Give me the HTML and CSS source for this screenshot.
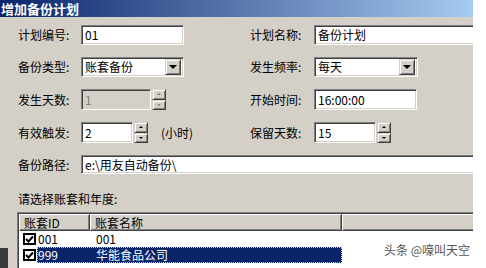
FILE: index.html
```html
<!DOCTYPE html>
<html lang="zh-CN">
<head>
<meta charset="utf-8">
<title>增加备份计划</title>
<link rel="stylesheet" href="styles.css">
</head>
<body>
<div class="dialog">
  <div class="titlebar">增加备份计划</div>
  <div class="form">
    <span class="label">计划编号:</span>
    <div class="cell"><div class="field w103">01</div></div>
    <span class="label">计划名称:</span>
    <div class="cell"><div class="field wide">备份计划</div></div>

    <span class="label">备份类型:</span>
    <div class="cell"><div class="field combo w103"><span class="val">账套备份</span><span class="dropbtn"><i class="tri-down"></i></span></div></div>
    <span class="label">发生频率:</span>
    <div class="cell"><div class="field combo w104"><span class="val">每天</span><span class="dropbtn"><i class="tri-down"></i></span></div></div>

    <span class="label">发生天数:</span>
    <div class="cell">
      <div class="field disabled w70">1</div>
      <div class="spin dis"><span class="sbtn"><i class="tu"></i></span><span class="sbtn"><i class="td"></i></span></div>
    </div>
    <span class="label">开始时间:</span>
    <div class="cell"><div class="field w103">16:00:00</div></div>

    <span class="label">有效触发:</span>
    <div class="cell">
      <div class="field w52">2</div>
      <div class="spin"><span class="sbtn"><i class="tu"></i></span><span class="sbtn"><i class="td"></i></span></div>
      <span class="unit">(小时)</span>
    </div>
    <span class="label">保留天数:</span>
    <div class="cell">
      <div class="field w62">15</div>
      <div class="spin"><span class="sbtn"><i class="tu"></i></span><span class="sbtn"><i class="td"></i></span></div>
    </div>

    <span class="label">备份路径:</span>
    <div class="cell span3"><div class="field full">e:\用友自动备份\</div></div>
  </div>

  <div class="section">请选择账套和年度:</div>
  <div class="listview">
    <div class="lv-head">
      <span class="hc h1">账套ID</span>
      <span class="hc h2">账套名称</span>
      <span class="hc h3"></span>
    </div>
    <div class="lv-row">
      <span class="check"><svg width="9" height="9" viewBox="0 0 9 9"><path d="M1 4 L3.5 6.5 L8 1.5" fill="none" stroke="#000" stroke-width="2"/></svg></span>
      <span class="sel">
        <span class="c1">001</span><span class="c2">001</span>
      </span>
    </div>
    <div class="lv-row">
      <span class="check"><svg width="9" height="9" viewBox="0 0 9 9"><path d="M1 4 L3.5 6.5 L8 1.5" fill="none" stroke="#000" stroke-width="2"/></svg></span>
      <span class="sel selected">
        <span class="c1">999</span><span class="c2">华能食品公司</span>
      </span>
    </div>
  </div>
  <div class="watermark">头条 @嚎叫天空</div>
  <div class="edge"></div>
</div>
</body>
</html>
```
FILE: styles.css
```css
html, body {
  margin: 0;
  padding: 0;
  background: #fff;
}
body {
  font-family: "Noto Sans CJK SC", "Liberation Sans", sans-serif;
  font-size: 12px;
  color: #000;
}
.dialog {
  position: relative;
  width: 473px;
  height: 268px;
  background: #d4d0c8;
  overflow: hidden;
}
.titlebar {
  height: 17px;
  line-height: 17px;
  padding-left: 1px;
  background: linear-gradient(to right, #0a246a, #a6caf0);
  color: #fff;
  font-weight: bold;
  font-size: 13px;
  letter-spacing: 0px;
}
.form {
  display: grid;
  width: 540px;
  grid-template-columns: 63px 169px 64px 226px;
  grid-template-rows: 20px 20px 21px 21px 19px;
  row-gap: 12px;
  padding: 8px 0 0 18px;
}
.label {
  align-self: center;
  white-space: nowrap;
  line-height: 14px;
}
.cell {
  display: flex;
  align-items: stretch;
}
.span3 {
  grid-column: 2 / 5;
}
.field {
  box-sizing: border-box;
  height: 100%;
  background: #fff;
  border: 1px solid;
  border-color: #808080 #fff #fff #808080;
  box-shadow: inset 1px 1px #404040, inset -1px -1px #d4d0c8;
  padding: 0 3px;
  display: flex;
  align-items: center;
  white-space: nowrap;
  line-height: 14px;
}
.w103 { width: 103px; }
.w104 { width: 104px; }
.w70 { width: 70px; }
.w52 { width: 52px; }
.w62 { width: 62px; }
.wide { width: 226px; }
.full { width: 100%; }
.disabled {
  background: #d4d0c8;
  color: #808080;
}
.combo {
  justify-content: space-between;
  padding-right: 2px;
}
.dropbtn {
  box-sizing: border-box;
  width: 16px;
  height: 16px;
  background: #d4d0c8;
  border: 1px solid;
  border-color: #d4d0c8 #404040 #404040 #d4d0c8;
  box-shadow: inset 1px 1px #fff, inset -1px -1px #808080;
  display: flex;
  align-items: center;
  justify-content: center;
}
.tri-down {
  width: 0;
  height: 0;
  border-left: 4px solid transparent;
  border-right: 4px solid transparent;
  border-top: 4px solid #000;
}
.spin {
  display: flex;
  flex-direction: column;
  width: 14px;
  margin-left: 1px;
}
.sbtn {
  box-sizing: border-box;
  flex: 1;
  background: #d4d0c8;
  border: 1px solid;
  border-color: #d4d0c8 #404040 #404040 #d4d0c8;
  box-shadow: inset 1px 1px #fff, inset -1px -1px #808080;
  display: flex;
  align-items: center;
  justify-content: center;
}
.tu, .td {
  width: 0;
  height: 0;
  border-left: 2px solid transparent;
  border-right: 2px solid transparent;
}
.tu { border-bottom: 2px solid #000; }
.td { border-top: 2px solid #000; }
.dis .tu { border-bottom-color: #808080; }
.dis .td { border-top-color: #808080; }
.unit {
  align-self: center;
  margin-left: 13px;
  white-space: nowrap;
}
.section {
  margin: 18px 0 0 18px;
  height: 14px;
  line-height: 14px;
}
.listview {
  box-sizing: border-box;
  margin: 6px 0 0 17px;
  width: 520px;
  height: 80px;
  background: #fff;
  border: 1px solid;
  border-color: #808080 #fff #fff #808080;
  box-shadow: inset 1px 1px #404040;
  padding: 1px 0 0 1px;
}
.lv-head {
  display: flex;
  height: 17px;
}
.hc {
  box-sizing: border-box;
  height: 17px;
  line-height: 15px;
  background: #d4d0c8;
  border: 1px solid;
  border-color: #fff #404040 #404040 #fff;
  box-shadow: inset -1px -1px #808080;
  padding-left: 4px;
  white-space: nowrap;
}
.h1 { width: 71px; }
.h2 { width: 252px; }
.h3 { flex: 1; }
.lv-row {
  display: flex;
  align-items: center;
  height: 16px;
}
.check {
  box-sizing: border-box;
  width: 13px;
  height: 12px;
  margin-left: 4px;
  border: 2px solid #000;
  background: #fff;
  display: flex;
  align-items: center;
  justify-content: center;
}
.sel {
  display: flex;
  align-items: center;
  height: 16px;
  width: 305px;
  margin-left: 1px;
  line-height: 14px;
}
.selected {
  background: #0a246a;
  color: #fff;
  outline: 1px dotted #c8c8c8;
  outline-offset: -1px;
}
.c1 {
  width: 53px;
  padding-left: 1px;
}
.c2 {
  padding-left: 5px;
}
.watermark {
  position: absolute;
  right: 3px;
  top: 243px;
  line-height: 14px;
  font-size: 12px;
  color: #555;
  text-shadow: 0 0 2px #fff;
  white-space: nowrap;
}
.edge {
  position: absolute;
  left: 0;
  top: 248px;
  width: 8px;
  height: 20px;
  background: #3a3a3a;
}
```
